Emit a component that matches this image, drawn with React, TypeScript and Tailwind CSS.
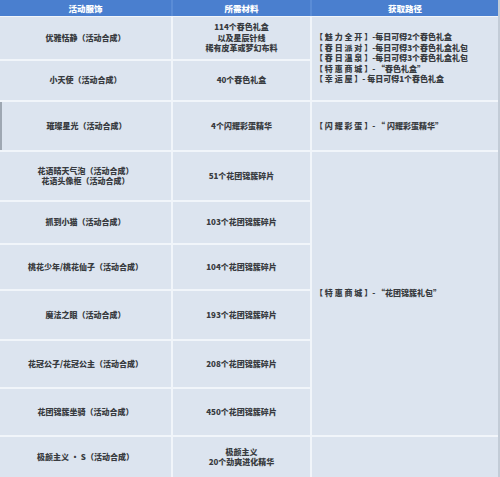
import type { ReactNode } from 'react';

const font = { fontFamily: '"Noto Sans CJK SC", "Noto Sans", sans-serif' };

const Cell = ({ children, className = '' }: { children?: ReactNode; className?: string }) => (
  <div
    className={`bg-[#dce4ef] flex flex-col items-center justify-center text-center text-[8px] leading-[10.5px] font-black text-[#383b40] ${className}`}
  >
    {children}
  </div>
);

const Route = ({ children, className = '' }: { children?: ReactNode; className?: string }) => (
  <div
    className={`bg-[#dce4ef] flex flex-col justify-center pl-[3px] text-[8px] leading-[10.5px] font-black text-[#383b40] whitespace-pre ${className}`}
  >
    {children}
  </div>
);

const materialRows: [string, string][] = [
  ['花语晴天气泡（活动合成）\n花语头像框（活动合成）', '51个花团锦簇碎片'],
  ['抓到小猫（活动合成）', '103个花团锦簇碎片'],
  ['桃花少年/桃花仙子（活动合成）', '104个花团锦簇碎片'],
  ['魔法之眼（活动合成）', '193个花团锦簇碎片'],
  ['花冠公子/花冠公主（活动合成）', '208个花团锦簇碎片'],
  ['花团锦簇坐骑（活动合成）', '450个花团锦簇碎片'],
];

export default function App() {
  return (
    <div className="w-[500px] h-[477px] bg-[#f1f5fa] border-r-2 border-[#c3ccd7]" style={font}>
      <div className="grid grid-cols-[171px_137px_186px] grid-rows-[15px_42px_39px_48px_48px_41px_44px_48px_46px_46px_40px] gap-[2px]">
        <div className="col-span-3 -mb-[2px] grid grid-cols-[171px_137px_186px] gap-[2px] bg-[#5a8cd6] h-[16px]">
          <div className="bg-[#4a7fcf] flex items-center justify-center text-white text-[8.5px] font-black">活动服饰</div>
          <div className="bg-[#4a7fcf] flex items-center justify-center text-white text-[8.5px] font-black">所需材料</div>
          <div className="bg-[#4a7fcf] flex items-center justify-center text-white text-[8.5px] font-black">获取路径</div>
        </div>

        <Cell>优雅恬静（活动合成）</Cell>
        <Cell>
          <span>114个春色礼盒</span>
          <span>以及星辰针线</span>
          <span>稀有皮革或梦幻布料</span>
        </Cell>
        <Route className="row-span-2">
          <span>【 魅 力 全 开 】-每日可得2个春色礼盒</span>
          <span>【 春 日 派 对 】-每日可得3个春色礼盒礼包</span>
          <span>【 春 日 温 泉 】-每日可得3个春色礼盒礼包</span>
          <span>【 特 惠 商 城 】- “春色礼盒”</span>
          <span>【 幸 运 屋 】- 每日可得1个春色礼盒</span>
        </Route>

        <Cell>小天使（活动合成）</Cell>
        <Cell>40个春色礼盒</Cell>

        <Cell className="border-l-2 border-[#9ea7b2]">璀璨星光（活动合成）</Cell>
        <Cell>4个闪耀彩蛋精华</Cell>
        <Route>
          <span>【 闪 耀 彩 蛋 】- “ 闪耀彩蛋精华”</span>
        </Route>

        {materialRows.map(([name, need], i) => (
          <div key={name} className="contents">
            <Cell className="whitespace-pre-line">{name}</Cell>
            <Cell>{need}</Cell>
            {i === 0 && (
              <Route className="row-span-6">
                <span>【 特 惠 商 城 】- “花团锦簇礼包”</span>
              </Route>
            )}
          </div>
        ))}

        <Cell>极颜主义 · S（活动合成）</Cell>
        <Cell>
          <span>极颜主义</span>
          <span>20个劲爽进化精华</span>
        </Cell>
        <Route />
      </div>
    </div>
  );
}
